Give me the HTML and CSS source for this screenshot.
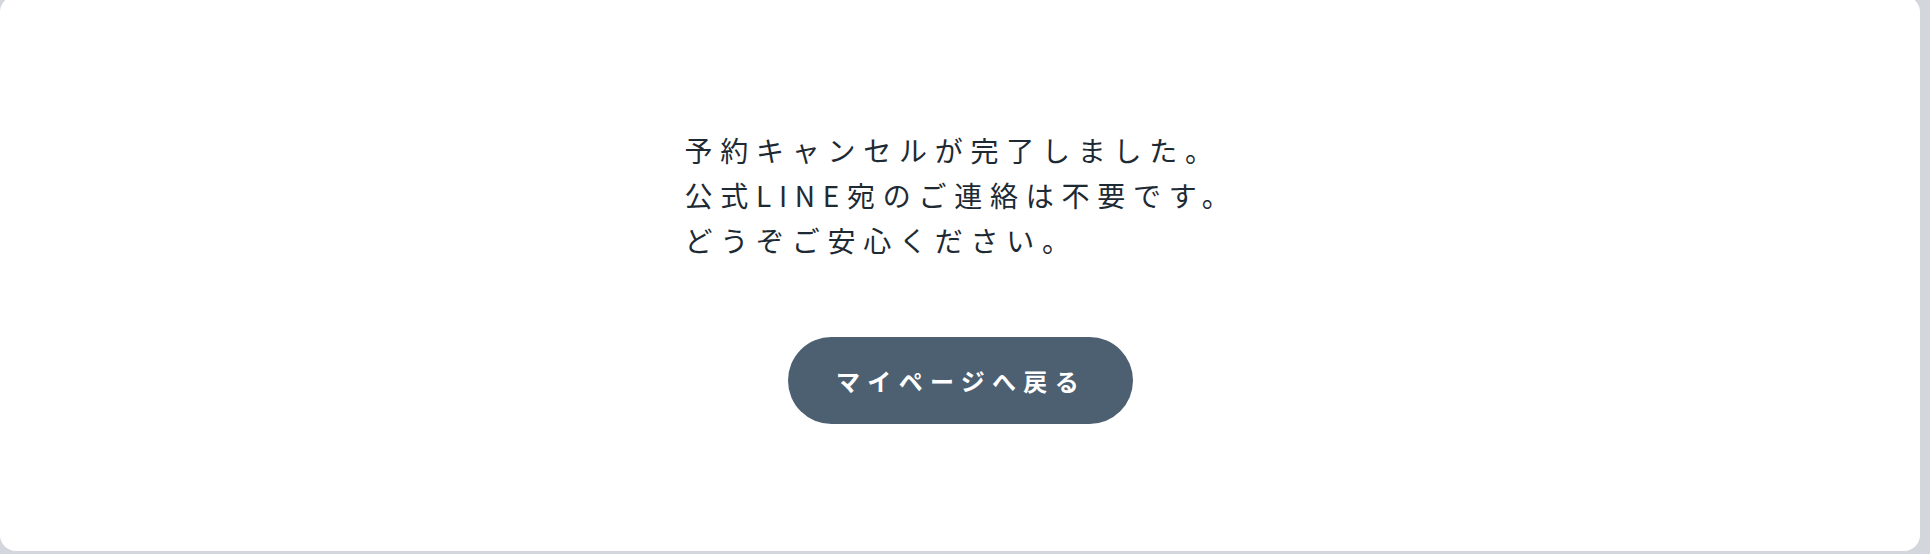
FILE: index.html
```html
<!DOCTYPE html>
<html lang="ja">
<head>
    <meta charset="UTF-8">
    <meta name="viewport" content="width=device-width, initial-scale=1.0">
    <title>予約キャンセル完了</title>
    <link rel="stylesheet" href="styles.css">
</head>
<body>
    <div class="card">
        <div class="message">
            <p>予約キャンセルが完了しました。</p>
            <p>公式LINE宛のご連絡は不要です。</p>
            <p>どうぞご安心ください。</p>
        </div>
        <a class="back-button" href="#">マイページへ戻る</a>
    </div>
</body>
</html>
```

FILE: styles.css
```css
body {
    font-family: "Noto Sans CJK JP", "Noto Sans", sans-serif;
    margin: 0;
    padding: 0;
    height: 554px;
    overflow: hidden;
    background-color: #d3d6dc;
}

.card {
    width: 1920px;
    height: 555px;
    margin-top: -4px;
    background-color: #fff;
    border-radius: 16px;
    display: flex;
    flex-direction: column;
    align-items: center;
    justify-content: center;
    gap: 74px;
    padding-top: 4px;
    box-sizing: border-box;
}

.message {
    color: #1e2a33;
    font-size: 28px;
    letter-spacing: 7.75px;
    line-height: 45px;
    padding-left: 2px;
}

.message p {
    margin: 0;
}

.back-button {
    display: flex;
    align-items: center;
    justify-content: center;
    width: 345px;
    height: 87px;
    border-radius: 44px;
    background-color: #4d6072;
    color: #fff;
    font-size: 24px;
    font-weight: 700;
    letter-spacing: 7.3px;
    text-decoration: none;
    box-sizing: border-box;
    padding-left: 2px;
}
```
